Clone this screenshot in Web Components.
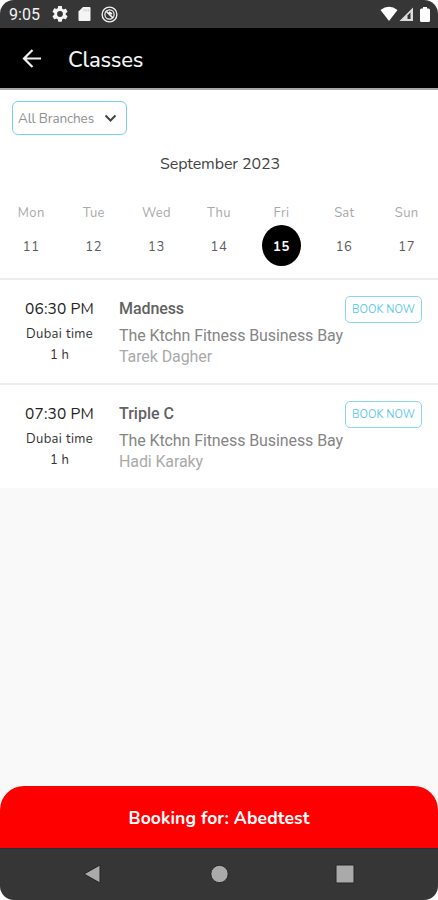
<!DOCTYPE html>
<html lang="en"><head><meta charset="utf-8"><title>Classes</title>
<style>html,body{margin:0;background:#fff}</style></head>
<body>
<classes-app></classes-app>
<script>
const define = (name, html, setup) => customElements.define(name, class extends HTMLElement {
  connectedCallback() {
    if (this.shadowRoot) return;
    const root = this.attachShadow({ mode: 'open' });
    const a = n => this.getAttribute(n) || '';
    root.innerHTML = typeof html === 'function' ? html(a) : html;
    if (setup) setup(this, root);
  }
});

// One line of text whose tracking is adjusted to a given advance width.
define('text-line', `<style>:host{display:block;white-space:nowrap}span{display:inline-block}</style><span><slot></slot></span>`,
  (el, root) => {
    const span = root.querySelector('span'), w = parseFloat(el.getAttribute('w'));
    const n = root.querySelector('slot').assignedNodes({ flatten: true }).map(t => t.textContent).join('').length;
    if (w && n) {
      const d = (w - span.getBoundingClientRect().width) / n;
      span.style.letterSpacing = d.toFixed(3) + 'px';
    }
  });

define('status-bar', `<style>
:host{display:flex;align-items:center;height:28px;box-sizing:border-box;padding:0 6px 0 9px;background:#363636;color:#f4f4f4;font:16px/28px Roboto,sans-serif}
svg{display:block;flex:none}.sp{flex:1}text-line{padding-top:1px}</style>
<text-line w="31">9:05</text-line>
<svg style="margin-left:12px" width="16" height="16" viewBox="2 2 20 20" fill="#f4f4f4"><path d="M19.14 12.94c.04-.3.06-.61.06-.94s-.02-.64-.07-.94l2.03-1.58a.49.49 0 0 0 .12-.61l-1.92-3.32a.49.49 0 0 0-.59-.22l-2.39.96a7 7 0 0 0-1.62-.94l-.36-2.54A.48.48 0 0 0 13.92 2h-3.84a.48.48 0 0 0-.47.41l-.36 2.54c-.59.24-1.13.57-1.62.94l-2.39-.96a.48.48 0 0 0-.59.22L2.74 8.87c-.12.21-.08.47.12.61l2.03 1.58a7 7 0 0 0 0 1.88l-2.03 1.58a.49.49 0 0 0-.12.61l1.92 3.32c.12.22.37.29.59.22l2.39-.96c.5.38 1.03.7 1.62.94l.36 2.54c.05.24.24.41.48.41h3.84c.24 0 .44-.17.47-.41l.36-2.54c.59-.24 1.13-.56 1.62-.94l2.39.96c.22.08.47 0 .59-.22l1.92-3.32a.48.48 0 0 0-.12-.61zM12 15.6a3.6 3.6 0 1 1 0-7.2 3.6 3.6 0 0 1 0 7.2z"/></svg>
<svg style="margin-left:10px" width="13" height="16"><path d="M5 1h6.5Q12.5 1 12.5 2v12q0 1-1 1h-10q-1 0-1-1V5.500z" fill="#f4f4f4"/><path d="M6 3v2.500M8.200 3v2.500M10.300 3v2.500" stroke="#bbb" stroke-width=".7"/></svg>
<svg style="margin-left:10px" width="17" height="17" viewBox="0 0 17 17" fill="none" stroke="#f4f4f4"><circle cx="8.500" cy="8.500" r="7.400" stroke-width="1.300"/><circle cx="8.500" cy="8.500" r="4.600" stroke-width="1.200"/><path d="M5 5l7 7M8 6l3 2" stroke-width="1.700"/></svg>
<div class="sp"></div>
<svg width="18" height="16"><path d="M9 15L.5 4Q9-2.500 17.500 4z" fill="#fff"/></svg>
<svg width="17" height="16"><path d="M1.500 15L15 1.500V15z" fill="#ddd"/><path d="M9.500 9.500L12.500 6.500V13H9.500z" fill="#333"/></svg>
<svg style="margin-left:4px" width="13" height="17"><path d="M4 1h4v1.500h1.500q1.500 0 1.500 1.500v10.500q0 1.500-1.500 1.500h-7Q1 16 1 14.500V4q0-1.500 1.500-1.500H4z" fill="#fff"/></svg>`);

define('app-header', `<style>
:host{display:flex;align-items:center;height:62px;box-sizing:border-box;padding:0 22px;background:#000;border-bottom:2px solid #a8a8a8;color:#f4f4f4;font:500 22px/60px Nunito,"Noto Sans",sans-serif}
svg{display:block;margin-right:26px}text-line{padding-top:3px}</style>
<svg width="20" height="20" fill="none" stroke="#f0f0f0" stroke-width="2.200"><path d="M19 10.500H2.500M10.500 2L2 10.500l8.500 8.500"/></svg>
<text-line w="75"><slot></slot></text-line>`);

define('branch-select', `<style>
:host{display:flex;align-items:center;width:115px;height:34px;box-sizing:border-box;border:1.500px solid #79d0ea;border-radius:6px;padding:1px 9px 0 5px;justify-content:space-between;color:#909090;font:13.500px/30px Nunito,"Open Sans",sans-serif}</style>
<text-line w="76"><slot></slot></text-line>
<svg width="13" height="9" fill="none" stroke="#444" stroke-width="2"><path d="M1.500 1.500l5 5 5-5"/></svg>`);

define('week-day', a => `<style>
:host{display:flex;flex-direction:column;align-items:center;color:#5c5c5c;font:13px/18px Nunito,"Open Sans",sans-serif}
.d{color:#a9a9a9;height:21px;padding-top:1px}.n{display:flex;align-items:center;justify-content:center;width:39px;height:41px;box-sizing:border-box;padding-top:2px;border-radius:50%}
:host([selected]) .n{background:#000;color:#fff;font-weight:700}</style>
<text-line class="d" w="${a('w')}">${a('day')}</text-line><div class="n"><text-line w="17"><slot></slot></text-line></div>`);

define('week-calendar', `<style>
:host{display:block;font:16px/22px Nunito,"Noto Sans",sans-serif;color:#444}
.m{display:flex;justify-content:center;height:50px;padding-left:2px}.w{display:grid;grid-template-columns:repeat(7,1fr)}</style>
<div class="m"><text-line w="120"><slot></slot></text-line></div>
<div class="w"><week-day day="Mon" w="27">11</week-day><week-day day="Tue" w="22">12</week-day><week-day day="Wed" w="29">13</week-day><week-day day="Thu" w="24">14</week-day><week-day day="Fri" w="16" selected>15</week-day><week-day day="Sat" w="20">16</week-day><week-day day="Sun" w="24">17</week-day></div>`);

define('book-button', `<style>
:host{display:flex;align-items:center;justify-content:center;width:77px;height:27px;box-sizing:border-box;border:1.500px solid #8bd8ee;border-radius:5px;color:#62c9e8;font:11px/24px Nunito,Lato,sans-serif}text-line{padding-top:1px}</style>
<text-line w="63"><slot></slot></text-line>`);

define('class-row', a => `<style>
:host{display:flex;height:105px;box-sizing:border-box;padding:17px 16px 0 0;background:#fff;border-top:2px solid #ececec}
.t{width:119px;display:flex;flex-direction:column;align-items:center;font:13px/20px Nunito,"Open Sans",sans-serif;color:#333}
.h{font-size:15.500px;line-height:24px;height:27px;color:#222}
.i{width:226px;font:16px/24px Roboto,sans-serif;color:#858585}
.n{font-weight:500;height:27px;color:#626262}.c{line-height:21px;color:#aaa;margin-top:-1px}.v{height:23px}
.t text-line:nth-child(2){height:21px}book-button{margin-top:-1px}</style>
<div class="t"><text-line class="h" w="69">${a('time')}</text-line><text-line w="67">Dubai time</text-line><text-line w="19">1 h</text-line></div>
<div class="i"><text-line class="n" w="${a('nw')}">${a('name')}</text-line><text-line class="v" w="224">The Ktchn Fitness Business Bay</text-line><text-line class="c" w="${a('cw')}">${a('coach')}</text-line></div>
<book-button>BOOK NOW</book-button>`);

define('booking-bar', `<style>
:host{display:flex;justify-content:center;height:62px;box-sizing:border-box;padding-top:2px;background:#f00;border-radius:24px 24px 0 0;color:#fff;font:700 17.500px/61px Nunito,Lato,sans-serif}</style>
<text-line w="181"><slot></slot></text-line>`);

define('nav-bar', `<style>
:host{display:flex;justify-content:space-between;align-items:center;height:52px;box-sizing:border-box;padding:0 83px 2px;background:#363636;border-top:1px solid #20303a}svg{display:block}</style>
<svg width="19" height="20"><path d="M1 10L17 1v18z" fill="#aaa" stroke="#242424"/></svg>
<svg width="20" height="20"><circle cx="10.500" cy="10" r="8.700" fill="#aaa" stroke="#242424"/></svg>
<svg width="20" height="20"><rect x="1" y="1" width="18" height="18" rx="1" fill="#aaa" stroke="#242424"/></svg>`);

define('classes-app', `<style>
:host{display:flex;flex-direction:column;width:438px;height:900px;overflow:hidden;border-radius:14px;background:#f9f9f9}
.p{background:#fff;height:188px;padding:11px 0 0;box-sizing:border-box}branch-select{margin-left:12px}week-calendar{margin-top:18px}.f{flex:1}</style>
<status-bar></status-bar><app-header>Classes</app-header>
<div class="p"><branch-select>All Branches</branch-select><week-calendar>September 2023</week-calendar></div>
<class-row time="06:30 PM" name="Madness" nw="65" coach="Tarek Dagher" cw="93"></class-row>
<class-row time="07:30 PM" name="Triple C" nw="55" coach="Hadi Karaky" cw="84"></class-row>
<div class="f"></div>
<booking-bar>Booking for: Abedtest</booking-bar><nav-bar></nav-bar>`);
</script>
</body></html>
